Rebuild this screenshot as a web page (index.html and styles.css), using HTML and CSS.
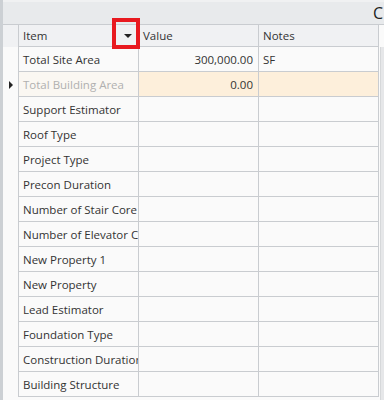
FILE: index.html
```html
<!DOCTYPE html>
<html>
<head>
<meta charset="utf-8">
<link rel="stylesheet" href="styles.css">
</head>
<body>
<div class="app">
  <div class="strip"></div>
  <div class="main">
    <div class="topbar"><span class="topbar-text">C</span></div>
    <div class="grid">
      <div class="ind hdr"></div>
      <div class="cell hdr">Item</div>
      <div class="cell hdr">Value</div>
      <div class="cell hdr last">Notes</div>

      <div class="ind"></div>
      <div class="cell">Total Site Area</div>
      <div class="cell num">300,000.00</div>
      <div class="cell last">SF</div>

      <div class="ind"><span class="arrow"></span></div>
      <div class="cell ro">Total Building Area</div>
      <div class="cell num edit">0.00</div>
      <div class="cell last edit"></div>

      <div class="ind"></div><div class="cell">Support Estimator</div><div class="cell"></div><div class="cell last"></div>
      <div class="ind"></div><div class="cell">Roof Type</div><div class="cell"></div><div class="cell last"></div>
      <div class="ind"></div><div class="cell">Project Type</div><div class="cell"></div><div class="cell last"></div>
      <div class="ind"></div><div class="cell">Precon Duration</div><div class="cell"></div><div class="cell last"></div>
      <div class="ind"></div><div class="cell">Number of Stair Core</div><div class="cell"></div><div class="cell last"></div>
      <div class="ind"></div><div class="cell">Number of Elevator Core</div><div class="cell"></div><div class="cell last"></div>
      <div class="ind"></div><div class="cell">New Property 1</div><div class="cell"></div><div class="cell last"></div>
      <div class="ind"></div><div class="cell">New Property</div><div class="cell"></div><div class="cell last"></div>
      <div class="ind"></div><div class="cell">Lead Estimator</div><div class="cell"></div><div class="cell last"></div>
      <div class="ind"></div><div class="cell">Foundation Type</div><div class="cell"></div><div class="cell last"></div>
      <div class="ind"></div><div class="cell">Construction Duration</div><div class="cell"></div><div class="cell last"></div>
      <div class="ind"></div><div class="cell">Building Structure</div><div class="cell"></div><div class="cell last"></div>
    </div>
    <div class="scroll"></div>
    <div class="filter-btn"><span class="tri"></span></div>
    <div class="highlight"></div>
  </div>
</div>
</body>
</html>
```
FILE: styles.css
```css
html, body {
  margin: 0;
  padding: 0;
  background: #fafafa;
}
body {
  font-family: "Open Sans", "Noto Sans", sans-serif;
  font-size: 11.5px;
  color: #333;
  width: 384px;
  height: 400px;
  overflow: hidden;
}
.app {
  display: flex;
  height: 400px;
}
.strip {
  width: 3px;
  background: #ccd0d4;
  flex: none;
}
.main {
  flex: 1;
  position: relative;
  overflow: hidden;
}
.topbar {
  height: 22px;
  border-top: 2px solid #f0f1f2;
  border-bottom: 1px solid #c9ccd0;
  background: #e8eaec;
  display: flex;
  justify-content: flex-end;
  align-items: center;
}
.topbar-text {
  font-size: 16px;
  color: #222;
  width: 11px;
  overflow: hidden;
  line-height: 20px;
}
.grid {
  display: grid;
  grid-template-columns: 15px 120px 120px 121px;
  grid-auto-rows: 25px;
  grid-template-rows: 22px;
}
.ind {
  display: flex;
  align-items: center;
  justify-content: center;
}
.ind.hdr {
  background: #f0f1f3;
}
.cell {
  border-left: 1px solid #c9ccd0;
  border-bottom: 1px solid #c9ccd0;
  padding: 0 5px 0 4px;
  display: flex;
  align-items: center;
  white-space: nowrap;
  overflow: hidden;
  background: #fafafa;
}
.cell.last {
  border-right: 1px solid #c9ccd0;
}
.cell.hdr {
  background: #f0f1f3;
}
.cell.num {
  justify-content: flex-end;
}
.cell.ro {
  color: #b0b0b0;
  background: #faf7f2;
}
.cell.edit {
  background: #fdefdb;
}
.arrow {
  width: 0;
  height: 0;
  border-top: 4px solid transparent;
  border-bottom: 4px solid transparent;
  border-left: 4px solid #222;
  margin-left: 1px;
}
.scroll {
  position: absolute;
  right: 0;
  top: 47px;
  width: 3px;
  bottom: 0;
  background: #e6e7e9;
  border-left: 1px solid #d6d8da;
}
.filter-btn {
  position: absolute;
  left: 115px;
  top: 25px;
  width: 20px;
  height: 21px;
  display: flex;
  align-items: center;
  justify-content: center;
}
.tri {
  width: 0;
  height: 0;
  border-left: 4px solid transparent;
  border-right: 4px solid transparent;
  border-top: 4px solid #222;
}
.highlight {
  position: absolute;
  left: 109px;
  top: 18px;
  width: 20px;
  height: 23px;
  border: 4px solid #e8191f;
}
```
